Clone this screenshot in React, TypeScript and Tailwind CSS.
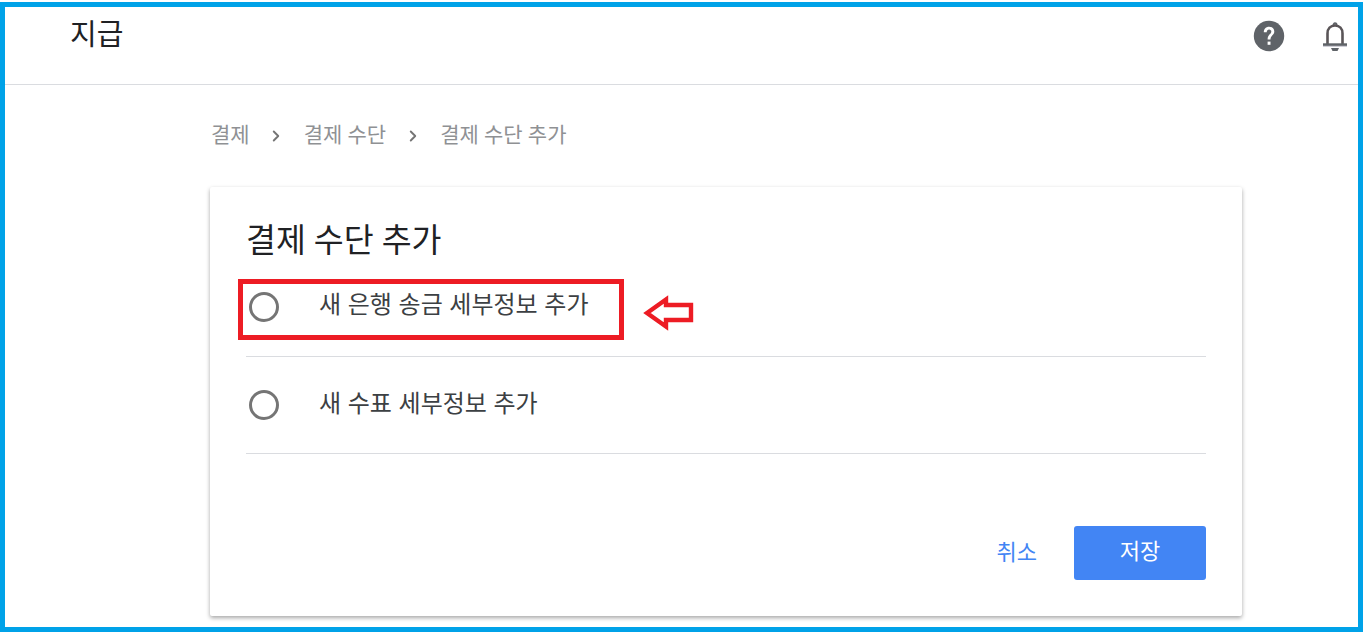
import React from 'react';
import { ChevronRight } from 'lucide-react';

const FONT = "font-['Roboto','Noto_Sans_CJK_KR',sans-serif]";

function Radio() {
  return <span className="block w-[30px] h-[30px] rounded-full border-[3px] border-[#757575] shrink-0" />;
}

export default function App() {
  return (
    <div className={`${FONT} h-[634px] w-[1363px] bg-white py-[2px] overflow-hidden`}>
      <div className="h-[630px] border-[5px] border-[#00a2e8] flex flex-col">
        <header className="h-[78px] shrink-0 border-b border-[#dadce0] flex justify-between pl-[65px] pr-[7px]">
          <h1 className="text-[29px] leading-[40px] mt-[8px] text-[#202124] font-normal">지급</h1>
          <div className="flex gap-[34px] mt-[13px] h-[32px] items-center">
            <svg width="32" height="32" viewBox="0 0 32 32">
              <circle cx="16" cy="16" r="15.2" fill="#5f6368" />
              <path d="M10.8 12.2c0-3.2 2.2-5.4 5.3-5.4s5.2 2 5.2 4.7c0 3.7-3.8 4-3.8 7.9h-2.9c0-4.9 3.7-5 3.7-7.8 0-1.2-.9-2.2-2.2-2.2s-2.3 1-2.4 2.8z" fill="#fff" />
              <rect x="14.6" y="21.6" width="2.9" height="3.2" fill="#fff" />
            </svg>
            <svg width="32" height="32" viewBox="0 0 32 32" fill="none">
              <path d="M14.4 5.5c0-1.1.7-2.2 1.6-2.2s1.6 1.1 1.6 2.2" stroke="#5f6368" strokeWidth="2" />
              <path d="M8.5 24V13.5c0-4.8 3-8 7.5-8s7.5 3.2 7.5 8V24" stroke="#5a5558" strokeWidth="2.6" />
              <path d="M4 24.6h24" stroke="#5f6368" strokeWidth="2.6" />
              <path d="M4 26.4h24" stroke="#c9c9d2" strokeWidth="1" />
              <path d="M12 28h8l-1.5 3h-5z" fill="#5f6368" />
            </svg>
          </div>
        </header>

        <main className="pl-[206px] pr-[116px] flex-1">
          <nav className="flex items-center h-[28px] mt-[37px] text-[21px] text-[#8f9194]">
            <span>결제</span>
            <ChevronRight size={18} strokeWidth={2.5} className="text-[#757575] ml-[17px] mr-[19px]" />
            <span>결제 수단</span>
            <ChevronRight size={18} strokeWidth={2.5} className="text-[#757575] ml-[18px] mr-[18px]" />
            <span>결제 수단 추가</span>
          </nav>

          <section className="relative ml-[-1px] mt-[37px] h-[429px] bg-white rounded-[2px] shadow-[0_2px_4px_rgba(0,0,0,0.35)] px-[36px] pt-[32px]">
            <h2 className="text-[32.5px] leading-[44px] font-normal text-[#202124]">결제 수단 추가</h2>

            <div className="h-[97px] border-b border-[#dadce0] flex items-start pl-[3px] pt-[32px] mt-[-3px]">
              <Radio />
              <span className="ml-[40px] mt-[-1px] text-[24px] leading-[28px] [word-spacing:0.7px] text-[#3c4043]">새 은행 송금 세부정보 추가</span>
            </div>
            <div className="h-[97px] border-b border-[#dadce0] flex items-start pl-[3px] pt-[33px]">
              <Radio />
              <span className="ml-[40px] text-[24px] leading-[28px] [word-spacing:0.7px] text-[#3c4043]">새 수표 세부정보 추가</span>
            </div>

            <div className="flex justify-end items-center mt-[72px]">
              <button className="text-[22px] pb-[2px] text-[#4285f4] mr-[37px]">취소</button>
              <button className="w-[132px] h-[54px] pb-[3px] bg-[#4285f4] rounded-[3px] text-white text-[22px]">저장</button>
            </div>

            {/* annotation drawn over the option */}
            <div className="absolute left-[28px] top-[92px] w-[386px] h-[61px] border-[5px] border-[#ed1c24]" />
            <svg className="absolute left-[432px] top-[107px]" width="52" height="38" viewBox="0 0 52 38" fill="none">
              <path d="M5 19 L24 5.5 V11 H49 V26 H24 V32.5 Z" stroke="#ed1c24" strokeWidth="4.4" />
            </svg>
          </section>
        </main>
      </div>
    </div>
  );
}
